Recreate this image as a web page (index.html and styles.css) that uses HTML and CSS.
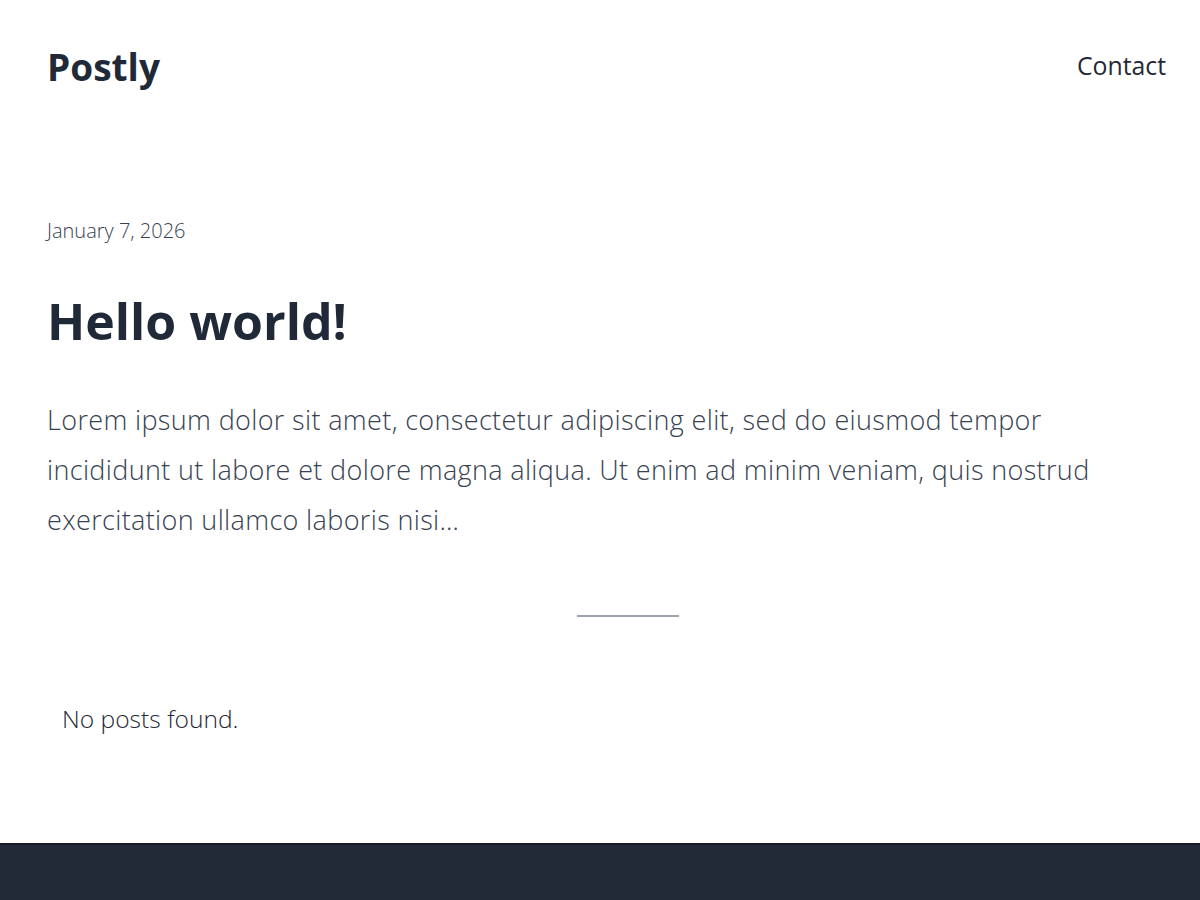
FILE: index.html
```html
<!DOCTYPE html>
<html>
<head>
<meta charset="utf-8">
<link rel="stylesheet" href="styles.css">
</head>
<body>
<div class="page">
  <header class="header">
    <div class="logo">Postly</div>
    <nav class="nav"><a href="#">Contact</a></nav>
  </header>
  <main class="main">
    <article class="post">
      <div class="date">January 7, 2026</div>
      <h1 class="title">Hello world!</h1>
      <p class="excerpt">Lorem ipsum dolor sit amet, consectetur adipiscing elit, sed do eiusmod tempor incididunt ut labore et dolore magna aliqua. Ut enim ad minim veniam, quis nostrud exercitation ullamco laboris nisi…</p>
    </article>
    <div class="divider-row"><hr class="divider"></div>
    <p class="empty">No posts found.</p>
  </main>
  <footer class="footer"></footer>
</div>
</body>
</html>
```
FILE: styles.css
```css
html, body { margin: 0; padding: 0; background: #fff; }
body { font-family: "Open Sans", "Noto Sans", sans-serif; color: #1f2937; }
.page { min-height: 900px; display: flex; flex-direction: column; }
.header { display: flex; justify-content: space-between; align-items: flex-start; padding: 42px 34px 0 47px; height: 78px; }
.logo { font-weight: 700; font-size: 37px; line-height: 50px; letter-spacing: 0; }
.nav a { color: #1f2937; text-decoration: none; font-size: 24.8px; line-height: 50px; display: block; margin-top: -2px; }
.main { flex: 1; padding: 96px 0 0 47px; }
.date { font-size: 20px; font-weight: 300; color: #374151; line-height: 30px; }
.title { font-size: 50px; font-weight: 700; margin: 40px 0 0; line-height: 70px; }
.excerpt { font-size: 27px; font-weight: 300; line-height: 50px; letter-spacing: 0.35px; color: #374151; margin: 39px 0 0; max-width: 1070px; }
.divider-row { display: flex; justify-content: center; padding-left: 9px; margin-top: 70px; }
.divider { width: 102px; border: 0; border-top: 2px solid #9ca3af; margin: 0; }
.empty { font-size: 24.6px; font-weight: 300; margin: 85px 0 0 15px; line-height: 34px; }
.footer { height: 55px; background: #222a38; border-top: 2px solid #151b26; margin-top: auto; }
```
